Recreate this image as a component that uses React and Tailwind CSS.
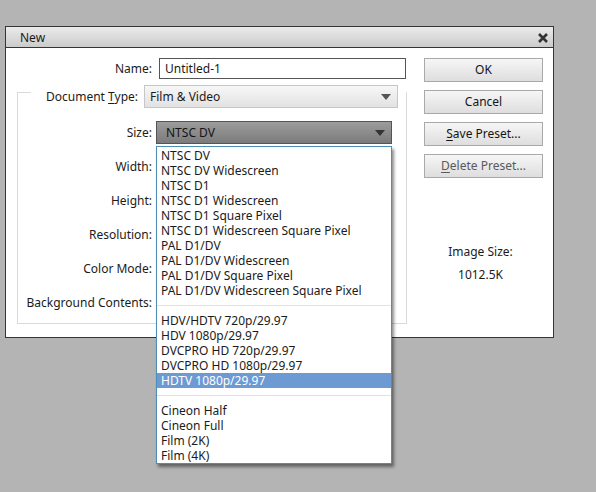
import React from 'react';

const sizes = [
    'NTSC DV',
    'NTSC DV Widescreen',
    'NTSC D1',
    'NTSC D1 Widescreen',
    'NTSC D1 Square Pixel',
    'NTSC D1 Widescreen Square Pixel',
    'PAL D1/DV',
    'PAL D1/DV Widescreen',
    'PAL D1/DV Square Pixel',
    'PAL D1/DV Widescreen Square Pixel',
    '-',
    'HDV/HDTV 720p/29.97',
    'HDV 1080p/29.97',
    'DVCPRO HD 720p/29.97',
    'DVCPRO HD 1080p/29.97',
    'HDTV 1080p/29.97',
    '-',
    'Cineon Half',
    'Cineon Full',
    'Film (2K)',
    'Film (4K)',
];

const Arrow = ({ color }) => (
    <svg width="10" height="6" viewBox="0 0 10 6" className="shrink-0">
        <path d="M0 0 H10 L5 6 Z" fill={color} />
    </svg>
);

const Btn = ({ children, disabled }) => (
    <button
        className={`h-[24px] w-full border border-[#a9a9a9] bg-gradient-to-b from-[#f6f6f6] to-[#dedede] text-[12px] ${disabled ? 'text-[#5a5a5a]' : 'text-[#151515]'}`}
    >
        {children}
    </button>
);

const Label = ({ w, children }) => (
    <div className={`${w} shrink-0 text-right text-[12px] text-[#1b1b1b]`}>{children}</div>
);

export default function App() {
    const selected = 'HDTV 1080p/29.97';

    return (
        <div className="w-[596px] h-[492px] bg-[#b4b4b4] pt-[26px] pl-[5px] overflow-hidden" style={{ fontFamily: '"Noto Sans", "Open Sans", sans-serif' }}>
            <div className="w-[549px] border border-[#353535] bg-white">
                {/* title bar */}
                <div className="h-[21px] flex items-center justify-between pl-[14px] pr-[5px] border-b border-[#353535] bg-gradient-to-b from-[#ebebeb] to-[#cbcbcb]">
                    <span className="text-[12px] text-[#1a1a1a] mt-px">New</span>
                    <svg width="10" height="10" viewBox="0 0 10 10" className="mt-px">
                        <path d="M1 1 L9 9 M9 1 L1 9" stroke="#333" strokeWidth="2.6" />
                    </svg>
                </div>

                {/* body */}
                <div className="h-[289px] flex">
                    <div className="w-[418px] shrink-0 pt-[10px]">
                        <div className="flex items-center h-[21px]">
                            <Label w="w-[146px]">Name:</Label>
                            <div className="ml-[7px] w-[247px] h-[21px] border border-[#555] flex items-center pl-[5px] text-[12px] text-[#1b1b1b]">
                                Untitled-1
                            </div>
                        </div>

                        <div className="ml-[11px] mt-[13px] w-[390px] h-[232px] border border-[#dadada]">
                            <div className="-mt-[8px] ml-[13px] h-[23px] flex items-center bg-white">
                                <Label w="w-[107px]">
                                    Document <span className="underline underline-offset-2">T</span>ype:
                                </Label>
                                <div className="ml-[6px] w-[254px] h-[23px] border border-[#c6c6c6] bg-gradient-to-b from-[#f7f7f7] to-[#e2e2e2] flex items-center justify-between pl-[5px] pr-[6px] text-[12px] text-[#1b1b1b]">
                                    <span>Film &amp; Video</span>
                                    <Arrow color="#555" />
                                </div>
                            </div>

                            <div className="mt-[13px] flex items-center h-[23px]">
                                <Label w="w-[134px]">Size:</Label>
                                <div className="relative ml-[4px]">
                                    <div className="w-[236px] h-[23px] border border-[#555] bg-gradient-to-b from-[#9c9c9c] to-[#7b7b7b] flex items-center justify-between pl-[9px] pr-[6px] text-[12px] text-[#141414]">
                                        <span>NTSC DV</span>
                                        <Arrow color="#333" />
                                    </div>

                                    {/* open list */}
                                    <div className="absolute left-0 top-[25px] z-10 w-[236px] border border-[#4d8fb4] bg-white pt-px shadow-[2px_3px_3px_rgba(0,0,0,0.45)]">
                                        {sizes.map((s, i) =>
                                            s === '-' ? (
                                                <div key={i} className="h-[15px] flex items-center">
                                                    <div className="w-full h-px bg-[#e2e2e2]"></div>
                                                </div>
                                            ) : (
                                                <div
                                                    key={i}
                                                    className={`h-[15px] leading-[15px] pl-[4px] text-[12px] whitespace-nowrap ${s === selected ? 'bg-[#6e9ad3] text-white' : 'text-[#1b1b1b]'}`}
                                                >
                                                    {s}
                                                </div>
                                            )
                                        )}
                                    </div>
                                </div>
                            </div>

                            <div className="mt-[6px]">
                                {['Width:', 'Height:', 'Resolution:', 'Color Mode:', 'Background Contents:'].map((l) => (
                                    <div key={l} className="h-[34px] flex items-center">
                                        <Label w="w-[134px]">{l}</Label>
                                    </div>
                                ))}
                            </div>
                        </div>
                    </div>

                    <div className="w-[119px] shrink-0 pt-[10px]">
                        <div className="flex flex-col gap-[8px]">
                            <Btn>OK</Btn>
                            <Btn>Cancel</Btn>
                            <Btn>
                                <span className="underline underline-offset-2">S</span>ave Preset...
                            </Btn>
                            <Btn disabled>
                                <span className="underline underline-offset-2">D</span>elete Preset...
                            </Btn>
                        </div>
                        <div className="mt-[66px] pr-[6px] text-center text-[12px] text-[#1b1b1b] leading-[16px]">
                            <div>Image Size:</div>
                            <div className="mt-[7px]">1012.5K</div>
                        </div>
                    </div>
                </div>
            </div>
        </div>
    );
}
